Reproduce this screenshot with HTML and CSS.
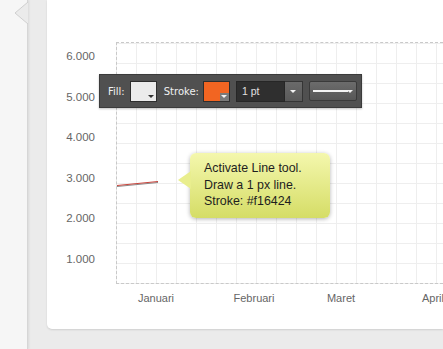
FILE: index.html
```html
<!DOCTYPE html>
<html>
<head>
<meta charset="utf-8">
<link rel="stylesheet" href="styles.css">
</head>
<body>
<div class="sidebar">
  <svg class="notch" width="14" height="24" viewBox="0 0 14 24"><polygon points="14,0 1,11 14,22" fill="#ebebeb"/><polyline points="14,0 1,11 14,22" fill="none" stroke="#cfcfcf" stroke-width="1"/></svg>
</div>
<div class="main">
  <div class="card">
    <div class="chart">
      <div class="yaxis">
        <span>6.000</span><span>5.000</span><span>4.000</span><span>3.000</span><span>2.000</span><span>1.000</span>
      </div>
      <div class="plot">
        <div class="grid">
          <svg class="series" width="60" height="240" viewBox="0 0 60 240"><line x1="0" y1="143.5" x2="41" y2="139.5" stroke="#8a8a8a" stroke-width="1"/><line x1="0" y1="142.5" x2="41" y2="138.5" stroke="#c9443c" stroke-width="1"/></svg>
        </div>
        <div class="xaxis">
          <span class="x1">Januari</span><span class="x2">Februari</span><span class="x3">Maret</span><span class="x4">April</span>
        </div>
      </div>
    </div>
    <div class="toolbar">
      <span class="lbl">Fill:</span>
      <span class="swatch fill"><i class="tri dark"></i></span>
      <span class="lbl">Stroke:</span>
      <span class="swatch stroke"><i class="box"><i class="tri light"></i></i></span>
      <span class="input">1 pt</span>
      <span class="dd"><i class="tri light"></i></span>
      <span class="style"><i class="bar"></i><i class="tri light"></i></span>
    </div>
    <div class="tip">
      <div class="tail"></div>
      <p>Activate Line tool.<br>Draw a 1 px line.<br>Stroke: #f16424</p>
    </div>
  </div>
</div>
</body>
</html>
```

FILE: styles.css
```css
* { box-sizing: border-box; }
html, body { margin: 0; padding: 0; }
body {
  width: 443px;
  height: 349px;
  overflow: hidden;
  display: flex;
  background: #ebebeb;
  font-family: "Liberation Sans", Arial, sans-serif;
}
.sidebar {
  width: 28px;
  flex: none;
  position: relative;
  background: #f6f6f6;
  border-right: 1px solid #d6d6d6;
  box-shadow: 1px 0 2px rgba(0,0,0,0.08);
}
.notch {
  position: absolute;
  right: -1px;
  top: 2px;
}
.main {
  flex: 1;
  min-width: 0;
  padding-left: 19px;
  padding-bottom: 20px;
}
.card {
  position: relative;
  height: 100%;
  background: #fff;
  border-radius: 0 0 0 5px;
  box-shadow: 0 1px 2px rgba(0,0,0,0.12);
}
.chart {
  display: flex;
}
.yaxis {
  width: 48px;
  flex: none;
  padding-top: 49px;
  display: flex;
  flex-direction: column;
  align-items: flex-end;
  gap: 26.6px;
  font-size: 11.5px;
  line-height: 14px;
  color: #666;
}
.plot {
  margin-left: 21px;
  padding-top: 42px;
  flex: 1;
  min-width: 0;
}
.grid {
  position: relative;
  height: 242px;
  border-top: 1px dashed #c9c9c9;
  border-bottom: 1px dashed #c9c9c9;
  border-left: 1px dashed #c9c9c9;
  background-image:
    linear-gradient(to bottom, #eeeeee 1px, transparent 1px),
    linear-gradient(to right, #eeeeee 1px, transparent 1px);
  background-size: 20px 20px, 20px 20px;
  background-position: 0 20px, 19px 0;
}
.series {
  position: absolute;
  left: 0;
  top: 0;
}
.xaxis {
  display: flex;
  padding-top: 7px;
  font-size: 11px;
  line-height: 14px;
  color: #666;
  overflow: hidden;
  white-space: nowrap;
}
.xaxis span {
  flex: none;
  text-align: center;
}
.x1 { width: 80px; }
.x2 { width: 116px; }
.x3 { width: 58px; }
.xaxis .x4 { flex: 1; text-align: left; padding-left: 52px; }
.toolbar {
  position: absolute;
  left: 52px;
  top: 74px;
  width: 263px;
  height: 34px;
  background: #505050;
  border: 1px solid #3b3b3b;
  box-shadow: 0 1px 2px rgba(0,0,0,0.25);
  display: flex;
  align-items: center;
  padding-left: 8px;
}
.lbl {
  color: #f0f0f0;
  font-family: "DejaVu Sans", sans-serif;
  font-size: 10px;
}
.swatch {
  position: relative;
  width: 27px;
  height: 21px;
  border: 1px solid #2e2e2e;
  margin-left: 5px;
  margin-right: 7px;
}
.fill { background: #ebebeb; }
.stroke { background: #f26522; margin-left: 4px; margin-right: 6px; }
.tri {
  position: absolute;
  width: 0;
  height: 0;
  border-left: 3px solid transparent;
  border-right: 3px solid transparent;
  border-top: 3px solid #333;
}
.tri.light { border-top-color: #f4f4f4; }
.fill .tri { right: 2px; bottom: 3px; }
.box {
  position: absolute;
  right: 0;
  bottom: 0;
  width: 9px;
  height: 8px;
  background: #7a7a7a;
}
.box .tri { left: 1px; top: 2px; }
.input {
  width: 49px;
  height: 21px;
  background: #2f2f2f;
  border: 1px solid #262626;
  color: #e0e0e0;
  font-size: 10.5px;
  line-height: 19px;
  padding-left: 5px;
}
.dd {
  position: relative;
  width: 18px;
  height: 21px;
  background: linear-gradient(#6a6a6a, #5a5a5a);
  border: 1px solid #353535;
  border-left: none;
}
.dd .tri { left: 5px; top: 8px; }
.style {
  position: relative;
  margin-left: 6px;
  width: 48px;
  height: 20px;
  background: linear-gradient(#6c6c6c, #575757);
  border: 1px solid #3a3a3a;
  border-radius: 2px;
}
.bar {
  position: absolute;
  left: 3px;
  top: 8px;
  width: 35px;
  height: 2px;
  background: #f4f4f4;
}
.style .tri { right: 3px; top: 8px; }
.tip {
  position: absolute;
  left: 143px;
  top: 153px;
  width: 140px;
  height: 65px;
  border-radius: 6px;
  background: linear-gradient(#f4f7ad, #d5dd66);
  box-shadow: 0 1px 4px rgba(0,0,0,0.3);
}
.tail {
  position: absolute;
  left: -12px;
  top: 18px;
  width: 0;
  height: 0;
  border-top: 9px solid transparent;
  border-bottom: 9px solid transparent;
  border-right: 13px solid #e9ee8e;
}
.tip p {
  margin: 0;
  padding: 7px 0 0 14px;
  font-size: 12.4px;
  line-height: 16.5px;
  color: #1e1e1e;
  white-space: nowrap;
}
```
